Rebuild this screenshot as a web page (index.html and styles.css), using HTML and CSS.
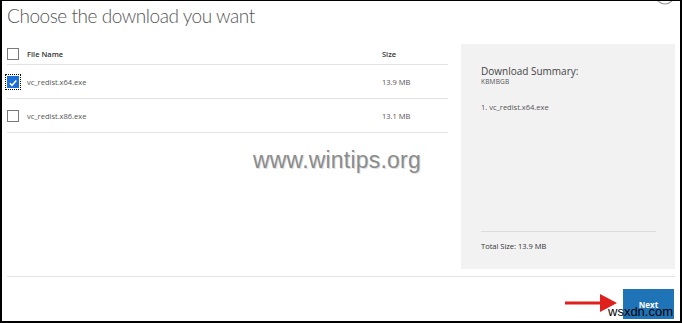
FILE: index.html
```html
<!DOCTYPE html>
<html>
<head>
<meta charset="utf-8">
<link rel="stylesheet" href="styles.css">
</head>
<body>
<div class="frame">
  <svg class="close-arc" width="24" height="8" viewBox="0 0 24 8"><circle cx="12" cy="-5" r="9" fill="none" stroke="#9a9a9a" stroke-width="1.2"/></svg>
  <h1 class="title">Choose the download you want</h1>
  <div class="main">
    <div class="table">
      <div class="row head">
        <span class="cell name"><span class="box"></span><span class="label">File Name</span></span>
        <span class="cell size">Size</span>
      </div>
      <div class="row">
        <span class="cell name"><span class="box checked"><svg width="12" height="12" viewBox="0 0 12 12"><path d="M2.2 6.3 L4.8 8.8 L10 3" fill="none" stroke="#fff" stroke-width="1.8"/></svg></span><span class="label">vc_redist.x64.exe</span></span>
        <span class="cell size">13.9 MB</span>
      </div>
      <div class="row">
        <span class="cell name"><span class="box"></span><span class="label">vc_redist.x86.exe</span></span>
        <span class="cell size">13.1 MB</span>
      </div>
    </div>
    <div class="summary">
      <div class="sum-top">
        <div class="sum-title">Download Summary:</div>
        <div class="sum-kb">KBMBGB</div>
        <div class="sum-item">1. vc_redist.x64.exe</div>
      </div>
      <div class="sum-total">Total Size: 13.9 MB</div>
    </div>
  </div>
  <div class="footer">
    <button class="next">Next</button>
  </div>
  <div class="wm-wintips">www.wintips.org</div>
  <svg class="arrow" width="54" height="22" viewBox="0 0 54 22"><line x1="0" y1="11" x2="38" y2="11" stroke="#e0201c" stroke-width="3"/><path d="M35 2 L52 11 L35 20 Z" fill="#e0201c"/></svg>
  <div class="wm-wsxdn">wsxdn.com</div>
</div>
</body>
</html>
```
FILE: styles.css
```css
* { box-sizing: border-box; }
html, body { margin: 0; padding: 0; background: #fff; }
body { width: 682px; height: 323px; overflow: hidden; font-family: "Open Sans", "Noto Sans", sans-serif; }
.frame {
  position: relative;
  width: 682px;
  height: 323px;
  border-style: solid;
  border-color: #000;
  border-width: 1px 2px 2px 2px;
  display: flex;
  flex-direction: column;
  overflow: hidden;
}
.close-arc { position: absolute; left: 651px; top: -1px; }
.title {
  margin: 1px 0 0 5px;
  font-family: "Lato", "Open Sans", sans-serif;
  font-weight: 300;
  font-size: 19px;
  letter-spacing: -0.45px;
  line-height: 28px;
  color: #555;
  height: 28px;
}
.main {
  margin: 14px 0 0 5px;
  display: flex;
  gap: 13px;
  height: 225px;
}
.table { width: 441px; display: flex; flex-direction: column; }
.row {
  display: flex;
  align-items: center;
  height: 34px;
  border-bottom: 1px solid #e2e2e2;
  font-size: 7.5px;
  color: #555;
}
.row.head { height: 21px; font-weight: 600; color: #333; }
.cell.name { width: 375px; display: flex; align-items: center; gap: 8px; }
.box {
  width: 12px; height: 12px;
  border: 1px solid #7a7a7a;
  background: #fff;
  display: flex;
}
.box.checked {
  background: #1c6fd6;
  border-color: #1c6fd6;
  outline: 1px dotted #000;
  outline-offset: 1px;
}
.summary {
  width: 214px;
  background: #f2f2f2;
  padding: 21px 19px 18px 20px;
  display: flex;
  flex-direction: column;
  justify-content: space-between;
}
.sum-title { font-size: 10px; line-height: 12px; color: #444; }
.sum-kb { font-size: 6.5px; line-height: 9px; color: #555; letter-spacing: 0.2px; }
.sum-item { font-size: 7.5px; color: #555; margin-top: 16px; }
.sum-total {
  border-top: 1px solid #dcdcdc;
  padding-top: 9px;
  font-size: 7.5px;
  color: #333;
}
.footer {
  margin: 7px 5px 0 5px;
  border-top: 1px solid #e2e2e2;
  display: flex;
  justify-content: flex-end;
  padding-top: 12px;
}
.next {
  width: 51px;
  height: 30px;
  margin-right: 1px;
  border: none;
  background: #1f73b7;
  color: #fff;
  font-family: "Open Sans", sans-serif;
  font-weight: 700;
  font-size: 8px;
  padding: 0;
}
.wm-wintips {
  position: absolute;
  left: 251px;
  top: 146px;
  font-family: "Liberation Sans", Arial, sans-serif;
  font-size: 23px;
  letter-spacing: 0.2px;
  color: #8c8c8c;
  text-shadow: 1px 1px 0 #e0e0e0;
}
.arrow { position: absolute; left: 563px; top: 291px; }
.wm-wsxdn {
  position: absolute;
  left: 606px;
  top: 303px;
  font-family: "Liberation Sans", Arial, sans-serif;
  font-size: 13px;
  color: #000;
}
```
